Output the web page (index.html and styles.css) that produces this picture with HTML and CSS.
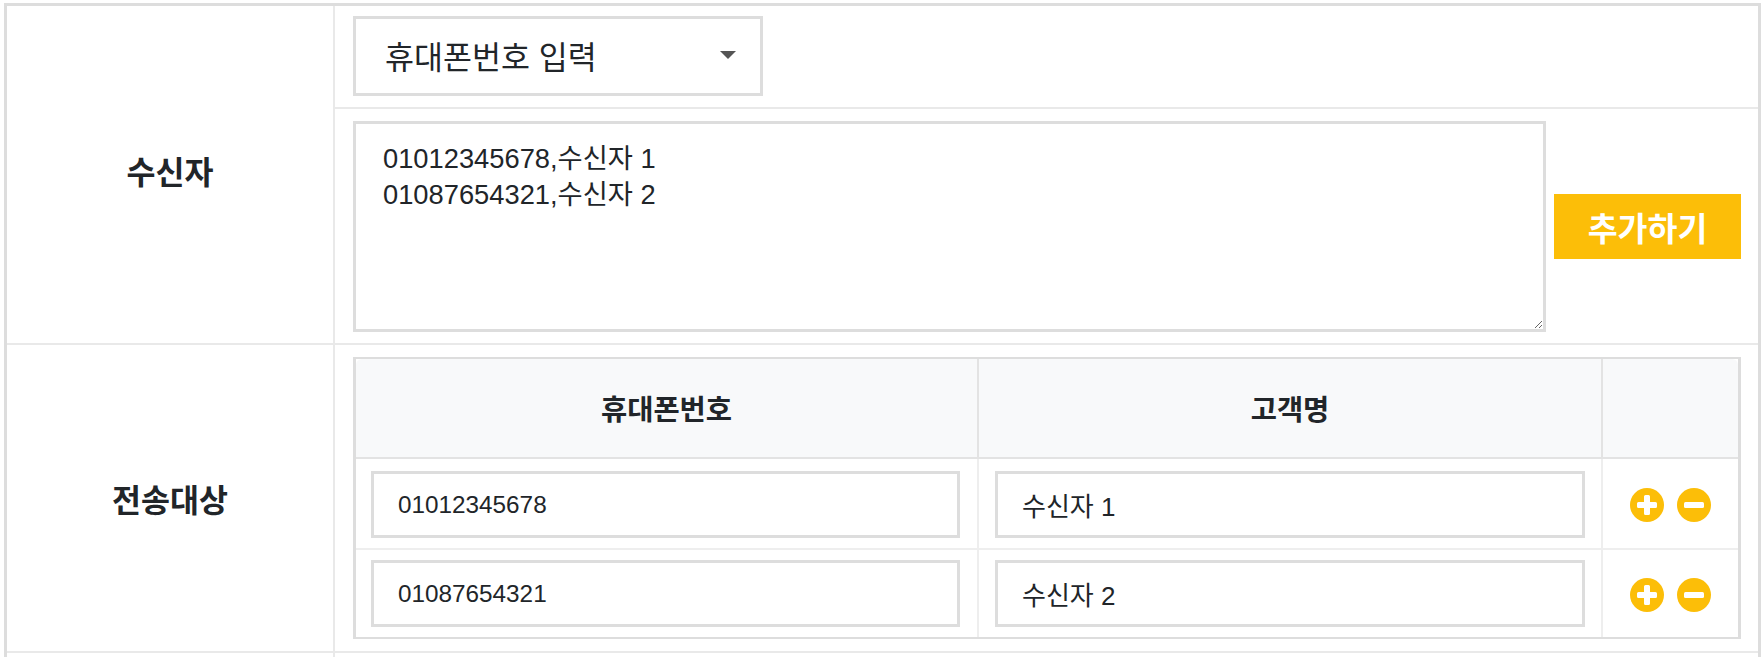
FILE: index.html
```html
<!DOCTYPE html>
<html lang="ko">
<head>
<meta charset="utf-8">
<title>수신자</title>
<link rel="stylesheet" href="styles.css">
</head>
<body>
<div class="form">
  <section class="row row-recipient">
    <div class="label">수신자</div>
    <div class="body">
      <div class="sub sub-select">
        <div class="select-wrap">
          <select class="select"><option>휴대폰번호 입력</option></select>
        </div>
      </div>
      <div class="sub sub-text">
        <textarea class="area">01012345678,수신자 1
01087654321,수신자 2</textarea>
        <button class="add" type="button">추가하기</button>
      </div>
    </div>
  </section>
  <section class="row row-target">
    <div class="label">전송대상</div>
    <div class="body body-target">
      <div class="grid">
        <div class="th th-1">휴대폰번호</div>
        <div class="th th-2">고객명</div>
        <div class="th th-3"></div>

        <div class="td td-1 first"><input class="field" value="01012345678"></div>
        <div class="td td-2 first"><input class="field field-name" value="수신자 1"></div>
        <div class="td td-3 first">
          <svg class="ico" viewBox="0 0 34 34"><circle cx="17" cy="17" r="17"/><path d="M14 8.500a1.500 1.500 0 0 1 1.500-1.500h3a1.500 1.500 0 0 1 1.500 1.500V14h5.500a1.500 1.500 0 0 1 1.500 1.500v3a1.500 1.500 0 0 1-1.500 1.500H20v5.500a1.500 1.500 0 0 1-1.500 1.500h-3a1.500 1.500 0 0 1-1.500-1.500V20H8.500A1.500 1.500 0 0 1 7 18.500v-3A1.500 1.500 0 0 1 8.500 14H14z"/></svg>
          <svg class="ico" viewBox="0 0 34 34"><circle cx="17" cy="17" r="17"/><rect x="7" y="14" width="20" height="6" rx="1.500"/></svg>
        </div>

        <div class="td td-1 last"><input class="field" value="01087654321"></div>
        <div class="td td-2 last"><input class="field field-name" value="수신자 2"></div>
        <div class="td td-3 last">
          <svg class="ico" viewBox="0 0 34 34"><circle cx="17" cy="17" r="17"/><path d="M14 8.500a1.500 1.500 0 0 1 1.500-1.500h3a1.500 1.500 0 0 1 1.500 1.500V14h5.500a1.500 1.500 0 0 1 1.500 1.500v3a1.500 1.500 0 0 1-1.500 1.500H20v5.500a1.500 1.500 0 0 1-1.500 1.500h-3a1.500 1.500 0 0 1-1.500-1.500V20H8.500A1.500 1.500 0 0 1 7 18.500v-3A1.500 1.500 0 0 1 8.500 14H14z"/></svg>
          <svg class="ico" viewBox="0 0 34 34"><circle cx="17" cy="17" r="17"/><rect x="7" y="14" width="20" height="6" rx="1.500"/></svg>
        </div>
      </div>
    </div>
  </section>
  <section class="row row-rest">
    <div class="label"></div>
    <div class="body"></div>
  </section>
</div>
</body>
</html>
```

FILE: styles.css
```css
* { box-sizing: border-box; }
html, body { margin: 0; padding: 0; background: #fff; overflow: hidden; }
body {
  height: 657px;
  padding: 3px 3px 0 4px;
  font-family: "Liberation Sans", "Noto Sans CJK KR", sans-serif;
  color: #212529;
}
.form { border: solid #ddd; border-width: 3px 3px 0 3px; }
.row { display: grid; grid-template-columns: 326px 1fr; border-bottom: 2px solid #e9e9e9; }
.row-recipient { height: 339px; }
.row-target { height: 308px; }
.row-rest { height: 10px; border-bottom: 0; }
.label {
  display: flex; align-items: center; justify-content: center;
  font-size: 31.500px; font-weight: 700; padding-bottom: 9px;
}
.row-target .label { padding-bottom: 0; }
.body { border-left: 2px solid #e9e9e9; display: flex; flex-direction: column; }
.sub-select { height: 103px; padding: 10px 0 0 18px; border-bottom: 2px solid #e9e9e9; }
.select-wrap { position: relative; width: 410px; height: 80px; }
.select-wrap::after {
  content: ""; position: absolute; right: 27px; top: 35px;
  border: 8px solid transparent; border-top-color: #555; border-bottom: 0;
}
.select {
  appearance: none; width: 100%; height: 100%;
  border: 3px solid #ddd; border-radius: 0; background: #fff;
  padding: 4px 0 0 29px; color: #212529;
  font: 31.500px "Liberation Sans", "Noto Sans CJK KR", sans-serif;
}
.sub-text { flex: 1; display: flex; align-items: flex-start; padding: 12px 17px 0 18px; }
.area {
  flex: none; width: 1193px; height: 211px; margin: 0;
  border: 3px solid #ddd; border-radius: 0; outline: 0;
  padding: 17px 27px; color: #212529;
  font: 27.300px/36px "Liberation Sans", "Noto Sans CJK KR", sans-serif;
}
.add {
  flex: none; width: 187px; height: 65px; margin: 73px 0 0 8px;
  border: 0; background: #fcbe08; color: #fff;
  font: 700 32.500px "Liberation Sans", "Noto Sans CJK KR", sans-serif;
}
.body-target { padding: 12px 17px 0 18px; }
.grid {
  display: grid; grid-template-columns: 623px 624px 135px;
  grid-template-rows: 100px 91px 87px;
  width: 1388px; height: 282px;
  border: solid #ddd; border-width: 2px 3px 2px 3px;
}
.th {
  display: flex; align-items: center; justify-content: center;
  background: #f8f9fa; border-bottom: 2px solid #e3e3e3; border-right: 2px solid #e3e3e3;
  font-size: 28.500px; font-weight: 700; padding-bottom: 2px;
}
.th-1 { border-top-left-radius: 6px; }
.th-3 { border-right: 0; border-top-right-radius: 6px; }
.td {
  display: flex; align-items: center; justify-content: center;
  padding: 10px 16px; border-right: 2px solid #eee; border-bottom: 2px solid #eee;
}
.td.first { padding-top: 12px; }
.td.last { border-bottom: 0; }
.td-1 { padding-left: 15px; padding-right: 17px; }
.td-3 { border-right: 0; gap: 13px; }
.td-3, .td-3.first { padding: 2px 1px 0 0; }
.field {
  width: 100%; height: 67px; margin: 0;
  border: 3px solid #ddd; border-radius: 0; outline: 0;
  padding: 0 24px; color: #212529;
  font: 24.300px "Liberation Sans", "Noto Sans CJK KR", sans-serif;
}
.field-name { font-size: 26px; }
.ico { width: 34px; height: 34px; flex: none; }
.ico circle { fill: #fcbe08; }
.ico path, .ico rect { fill: #fff; }
```
